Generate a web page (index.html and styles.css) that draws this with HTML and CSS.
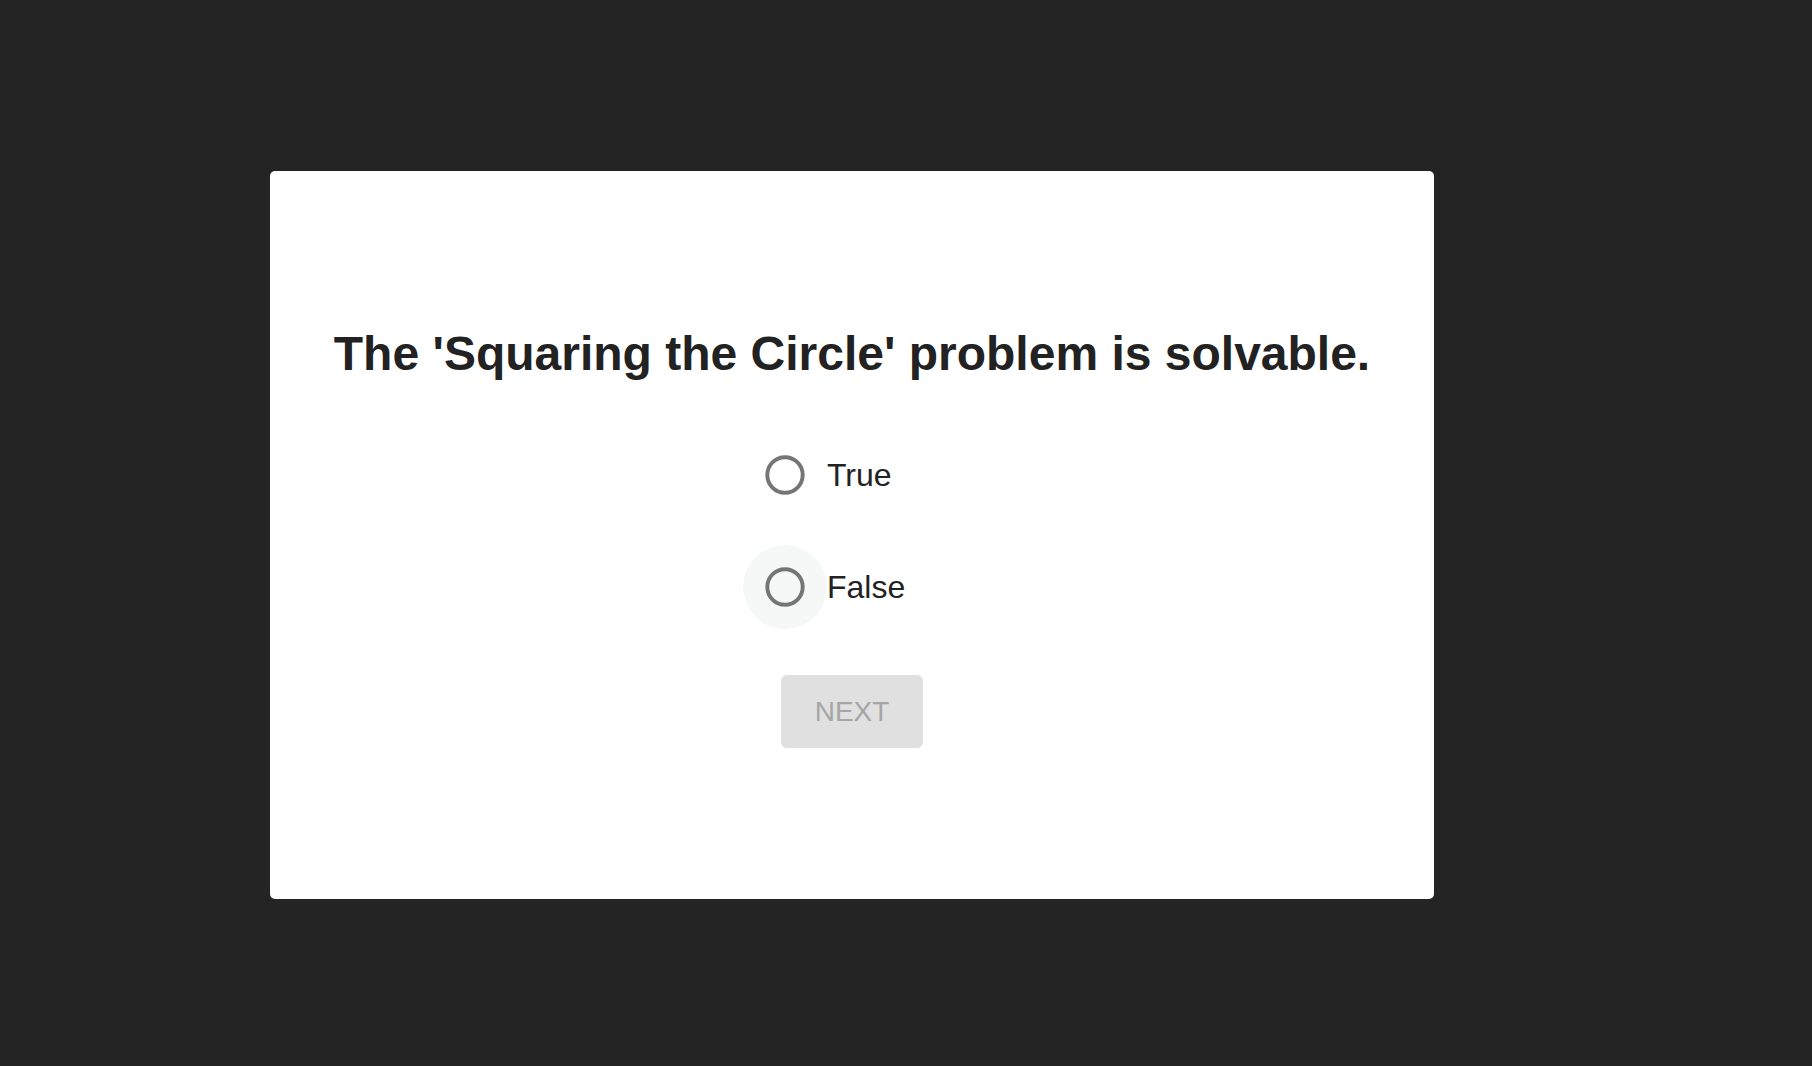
FILE: index.html
```html
<!DOCTYPE html>
<html>
<head>
<meta charset="utf-8">
<link rel="stylesheet" href="styles.css">
</head>
<body>
<div class="card">
  <h1 class="question">The 'Squaring the Circle' problem is solvable.</h1>
  <div class="options">
    <label class="option">
      <span class="radio">
        <svg width="40" height="40" viewBox="0 0 40 40"><circle cx="20" cy="20" r="17.7" fill="none" stroke="#757575" stroke-width="3.9"/></svg>
      </span>
      <span class="label">True</span>
    </label>
    <label class="option">
      <span class="radio hover">
        <svg width="40" height="40" viewBox="0 0 40 40"><circle cx="20" cy="20" r="17.7" fill="none" stroke="#757575" stroke-width="3.9"/></svg>
      </span>
      <span class="label">False</span>
    </label>
  </div>
  <button class="next" disabled>NEXT</button>
</div>
</body>
</html>
```

FILE: styles.css
```css
html, body {
  margin: 0;
  padding: 0;
  background: #242424;
  font-family: "Liberation Sans", Arial, sans-serif;
}

body {
  padding-top: 171px;
  padding-left: 270px;
}

.card {
  box-sizing: border-box;
  width: 1164px;
  height: 728px;
  background: #ffffff;
  border-radius: 5px;
  padding-top: 153px;
  display: flex;
  flex-direction: column;
  align-items: center;
}

.question {
  margin: 0;
  font-size: 48px;
  line-height: 60px;
  font-weight: 700;
  color: #222222;
  text-align: center;
}

.options {
  margin-top: 35px;
  width: 218px;
  display: flex;
  flex-direction: column;
}

.option {
  height: 112px;
  display: flex;
  align-items: center;
}

.radio {
  width: 84px;
  height: 84px;
  border-radius: 50%;
  display: flex;
  align-items: center;
  justify-content: center;
}

.radio svg {
  display: block;
}

.radio.hover {
  background: #f6f8f8;
}

.label {
  font-size: 32px;
  color: #222222;
}

.next {
  margin-top: 32px;
  width: 142px;
  height: 73px;
  border: none;
  border-radius: 6px;
  background: #e0e0e0;
  color: #a6a6a6;
  font-family: "Liberation Sans", Arial, sans-serif;
  font-size: 28px;
  padding: 0;
}
```
